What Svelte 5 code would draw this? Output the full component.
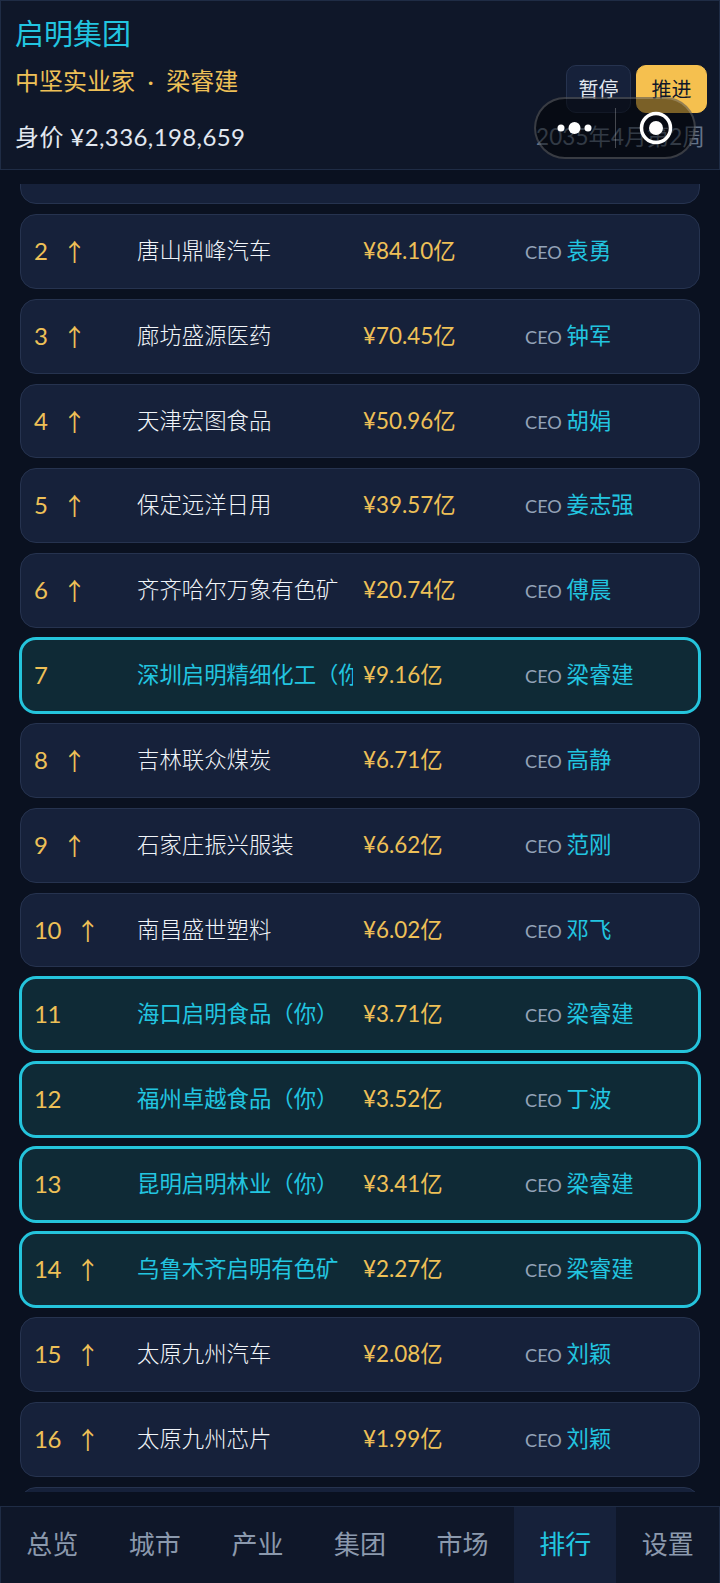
<script>
  import { onMount } from 'svelte';

  const rows = [
    { rank: 1, up: true, name: '北京华夏能源', value: '¥96.32亿', ceo: '周楠' },
    { rank: 2, up: true, name: '唐山鼎峰汽车', value: '¥84.10亿', ceo: '袁勇' },
    { rank: 3, up: true, name: '廊坊盛源医药', value: '¥70.45亿', ceo: '钟军' },
    { rank: 4, up: true, name: '天津宏图食品', value: '¥50.96亿', ceo: '胡娟' },
    { rank: 5, up: true, name: '保定远洋日用', value: '¥39.57亿', ceo: '姜志强' },
    { rank: 6, up: true, name: '齐齐哈尔万象有色矿', value: '¥20.74亿', ceo: '傅晨' },
    { rank: 7, up: false, name: '深圳启明精细化工（你）', value: '¥9.16亿', ceo: '梁睿建', mine: true },
    { rank: 8, up: true, name: '吉林联众煤炭', value: '¥6.71亿', ceo: '高静' },
    { rank: 9, up: true, name: '石家庄振兴服装', value: '¥6.62亿', ceo: '范刚' },
    { rank: 10, up: true, name: '南昌盛世塑料', value: '¥6.02亿', ceo: '邓飞' },
    { rank: 11, up: false, name: '海口启明食品（你）', value: '¥3.71亿', ceo: '梁睿建', mine: true },
    { rank: 12, up: false, name: '福州卓越食品（你）', value: '¥3.52亿', ceo: '丁波', mine: true },
    { rank: 13, up: false, name: '昆明启明林业（你）', value: '¥3.41亿', ceo: '梁睿建', mine: true },
    { rank: 14, up: true, name: '乌鲁木齐启明有色矿', value: '¥2.27亿', ceo: '梁睿建', mine: true },
    { rank: 15, up: true, name: '太原九州汽车', value: '¥2.08亿', ceo: '刘颖' },
    { rank: 16, up: true, name: '太原九州芯片', value: '¥1.99亿', ceo: '刘颖' },
    { rank: 17, up: true, name: '合肥新锐电子', value: '¥1.87亿', ceo: '陈洁' }
  ];

  const tabs = ['总览', '城市', '产业', '集团', '市场', '排行', '设置'];
  const activeTab = '排行';

  let list;

  // the ranking is scrolled a little past the first row
  onMount(() => {
    list.scrollTop = 55;
  });
</script>

<div class="page">
  <header class="top">
    <div class="info">
      <div class="company">启明集团</div>
      <div class="person">中坚实业家<span class="sep">·</span>梁睿建</div>
      <div class="worth">身价 ¥2,336,198,659</div>
    </div>
    <div class="side">
      <div class="actions">
        <button class="btn">暂停</button>
        <button class="btn primary">推进</button>
      </div>
      <div class="date">2035年4月第2周</div>
    </div>
  </header>

  <main class="list" bind:this={list}>
    {#each rows as row}
      <div class="row" class:mine={row.mine}>
        <div class="rank">
          <span class="num">{row.rank}</span>
          {#if row.up}<span class="arrow">↑</span>{/if}
        </div>
        <div class="name">{row.name}</div>
        <div class="value">{row.value}</div>
        <div class="ceo">CEO <b>{row.ceo}</b></div>
      </div>
    {/each}
  </main>

  <nav class="tabs">
    {#each tabs as tab}
      <div class="tab" class:active={tab === activeTab}>{tab}</div>
    {/each}
  </nav>

  <div class="capsule">
    <svg width="42" height="14" viewBox="0 0 42 14" class="dots">
      <circle cx="7" cy="7" r="3.5" fill="#fff" />
      <circle cx="20.5" cy="7" r="6" fill="#fff" />
      <circle cx="34" cy="7" r="3.5" fill="#fff" />
    </svg>
    <span class="divider"></span>
    <svg width="36" height="36" viewBox="0 0 36 36" class="target">
      <circle cx="18" cy="18" r="14.5" fill="none" stroke="#fff" stroke-width="3.5" />
      <circle cx="18" cy="18" r="7" fill="#fff" />
    </svg>
  </div>
</div>

<style>
  :global(body) {
    background: #0a1120;
  }

  .page {
    position: relative;
    height: 1583px;
    display: flex;
    flex-direction: column;
    overflow: hidden;
    background: #0a1120;
    font-family: "Lato", "Noto Sans CJK SC", sans-serif;
    line-height: 1.2;
    color: #e2e8f0;
  }

  .top {
    height: 170px;
    box-sizing: border-box;
    flex: none;
    display: flex;
    justify-content: space-between;
    padding: 14px 12px 0 14px;
    background: #0f1729;
    border: 1px solid #1f2c45;
  }

  .company {
    font-size: 29px;
    line-height: 38px;
    color: #22c5e0;
  }

  .person {
    margin-top: 10px;
    font-size: 24px;
    line-height: 36px;
    color: #eec057;
  }

  .sep {
    margin: 0 12.5px;
  }

  .worth {
    margin-top: 20px;
    font-size: 24px;
    line-height: 36px;
    letter-spacing: 0.4px;
  }

  .side {
    display: flex;
    flex-direction: column;
    align-items: flex-end;
  }

  .actions {
    display: flex;
    gap: 5px;
    margin-top: 50px;
  }

  .btn {
    width: 65px;
    height: 48px;
    padding: 0;
    border: 1px solid #26334f;
    border-radius: 10px;
    background: #16213a;
    color: #e2e8f0;
    font: inherit;
    font-size: 20px;
  }

  .primary {
    width: 71px;
    background: #f5c04f;
    border-color: #f5c04f;
    color: #0f1729;
  }

  .date {
    margin-top: 7px;
    margin-right: 2px;
    font-size: 22.4px;
    line-height: 34px;
    letter-spacing: 0.15px;
    color: #64748b;
  }

  .list {
    flex: 1;
    margin: 14px 0;
    padding: 0 20px;
    display: flex;
    flex-direction: column;
    gap: 10px;
    overflow-y: auto;
    scrollbar-width: none;
  }

  .row {
    flex: none;
    height: 74.85px;
    box-sizing: border-box;
    display: grid;
    grid-template-columns: 103px 226px 162px 1fr;
    align-items: center;
    padding-left: 13px;
    background: #16213a;
    border: 1px solid #26334f;
    border-radius: 16px;
    font-size: 22.4px;
  }

  .row.mine {
    padding-left: 12px;
    background: #0f2a36;
    border: 2px solid #25c4dc;
    box-shadow: 0 0 0 1px #25c4dc;
  }

  .rank {
    display: flex;
    align-items: center;
    gap: 15px;
    font-size: 24px;
    color: #eec057;
  }

  .num {
    letter-spacing: -0.5px;
  }

  .arrow {
    font-family: "Noto Sans CJK SC", sans-serif;
  }

  .name {
    overflow: hidden;
    white-space: nowrap;
    margin-right: 10px;
    font-weight: 300;
    color: #f1f5f9;
  }

  .mine .name {
    font-weight: 400;
    color: #22c5e0;
  }

  .value {
    color: #eec057;
  }

  .ceo {
    font-size: 18.2px;
    color: #94a3b8;
  }

  .ceo b {
    font-size: 22.4px;
    font-weight: 400;
    color: #22c5e0;
  }

  .tabs {
    flex: none;
    height: 77px;
    box-sizing: border-box;
    display: grid;
    grid-template-columns: repeat(7, 1fr);
    background: #0f1729;
    border: 1px solid #1f2c45;
    border-bottom: none;
  }

  .tab {
    display: flex;
    align-items: center;
    justify-content: center;
    font-size: 26px;
    color: #8b99ad;
  }

  .tab.active {
    background: #16213a;
    color: #22c5e0;
  }

  .capsule {
    position: absolute;
    top: 97px;
    left: 534px;
    width: 162px;
    height: 62px;
    box-sizing: border-box;
    display: flex;
    align-items: center;
    border: 2px solid rgba(255, 255, 255, 0.2);
    border-radius: 31px;
    background: rgba(0, 0, 0, 0.5);
  }

  .dots {
    margin-left: 18px;
  }

  .divider {
    width: 1px;
    height: 40px;
    margin-left: 19px;
    background: rgba(255, 255, 255, 0.25);
  }

  .target {
    margin-left: 22px;
  }
</style>
